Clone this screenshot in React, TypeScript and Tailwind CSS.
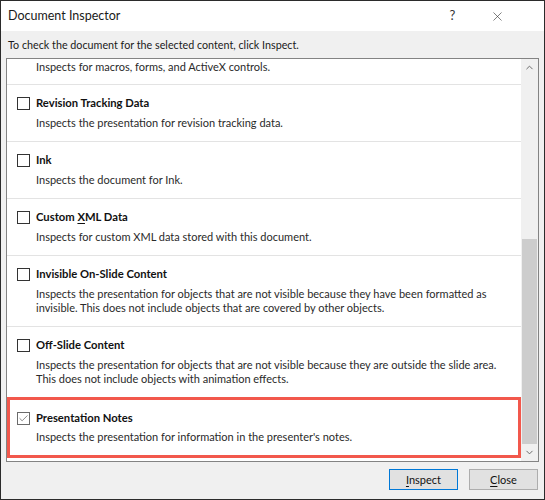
import { Check, X, ChevronUp, ChevronDown } from 'lucide-react';

interface InspectItem {
  title?: string;
  accessKey?: number;
  desc: string[];
  checked?: boolean;
  highlight?: boolean;
}

const items: InspectItem[] = [
  { title: 'Revision Tracking Data', desc: ['Inspects the presentation for revision tracking data.'] },
  { title: 'Ink', desc: ['Inspects the document for Ink.'] },
  { title: 'Custom XML Data', accessKey: 7, desc: ['Inspects for custom XML data stored with this document.'] },
  {
    title: 'Invisible On-Slide Content',
    desc: [
      'Inspects the presentation for objects that are not visible because they have been formatted as',
      'invisible. This does not include objects that are covered by other objects.',
    ],
  },
  {
    title: 'Off-Slide Content',
    desc: [
      'Inspects the presentation for objects that are not visible because they are outside the slide area.',
      'This does not include objects with animation effects.',
    ],
  },
  {
    title: 'Presentation Notes',
    desc: ["Inspects the presentation for information in the presenter's notes."],
    checked: true,
    highlight: true,
  },
];

function Label({ text, index }: { text: string; index?: number }) {
  if (index === undefined) return <>{text}</>;
  return (
    <>
      {text.slice(0, index)}
      <span className="underline underline-offset-2">{text[index]}</span>
      {text.slice(index + 1)}
    </>
  );
}

function Item({ item }: { item: InspectItem }) {
  return (
    <div
      className={
        item.highlight
          ? 'border-[3px] border-[#f2584c] pl-[7px] pt-[10px] pb-[11px]'
          : 'border-t border-[#e3e3e3] pl-[10px] pt-[10px] pb-[11px]'
      }
    >
      <div className="flex items-center h-[16px]">
        <span
          className={`w-[13px] h-[13px] bg-white border flex items-center justify-center shrink-0 ${
            item.checked ? 'border-[#6b6b6b]' : 'border-[#333333]'
          }`}
        >
          {item.checked && <Check size={11} strokeWidth={1.5} className="text-[#555]" />}
        </span>
        <span className="ml-[6px] font-bold text-[11.25px] text-[#111] whitespace-nowrap">
          <Label text={item.title ?? ''} index={item.accessKey} />
        </span>
      </div>
      <div className={`${item.highlight ? 'mt-[4px]' : 'mt-[5px]'} pl-[19px] text-[#2a2a2a] leading-[14px]`}>
        {item.desc.map((line) => (
          <div key={line} className="whitespace-nowrap">
            {line}
          </div>
        ))}
      </div>
    </div>
  );
}

export default function App() {
  return (
    <div
      className="w-[545px] h-[500px] border border-[#2b2b2b] bg-[#f0f0f0] flex flex-col text-[11px] text-[#1a1a1a] overflow-hidden"
      style={{ fontFamily: 'Lato, "Noto Sans", sans-serif' }}
    >
      {/* Title bar */}
      <div className="h-[30px] bg-white flex items-center pl-[7px] pr-[24px] shrink-0">
        <span className="text-[12.5px] text-[#1a1a1a] flex-1">Document Inspector</span>
        <span className="text-[13px] text-[#333] w-[45px] text-center">?</span>
        <span className="w-[45px] flex justify-center text-[#333]">
          <X size={15} strokeWidth={1} />
        </span>
      </div>

      <div className="px-[5px] pt-[6px]">
        <p className="pl-[2px] leading-[16px] text-[10.75px]">
          To check the document for the selected content, click Inspect.
        </p>

        {/* List box */}
        <div className="mt-[5px] h-[404px] border border-[#838383] bg-white flex overflow-hidden">
          <div className="flex-1 flex flex-col overflow-hidden">
            <div className="pl-[29px] pt-[1px] pb-[10px] leading-[14px] text-[#2a2a2a]">
              Inspects for macros, forms, and ActiveX controls.
            </div>
            {items.map((item) => (
              <Item key={item.title} item={item} />
            ))}
          </div>

          {/* Scrollbar */}
          <div className="w-[17px] bg-[#f0f0f0] flex flex-col shrink-0">
            <div className="h-[17px] flex items-center justify-center text-[#606060]">
              <ChevronUp size={11} strokeWidth={2} />
            </div>
            <div className="flex-1 flex flex-col px-[1px]">
              <div className="h-[163px]" />
              <div className="flex-1 bg-[#cdcdcd]" />
            </div>
            <div className="h-[17px] flex items-center justify-center text-[#606060]">
              <ChevronDown size={11} strokeWidth={2} />
            </div>
          </div>
        </div>

        {/* Buttons */}
        <div className="flex justify-end gap-[11px] mt-[7px] pr-[1px]">
          <button className="w-[69px] h-[21px] bg-[#e1e1e1] border border-[#0078d7] text-[11px] text-[#111] leading-none">
            <Label text="Inspect" index={0} />
          </button>
          <button className="w-[69px] h-[21px] bg-[#e1e1e1] border border-[#adadad] text-[11px] text-[#111] leading-none">
            <Label text="Close" index={0} />
          </button>
        </div>
      </div>
    </div>
  );
}
